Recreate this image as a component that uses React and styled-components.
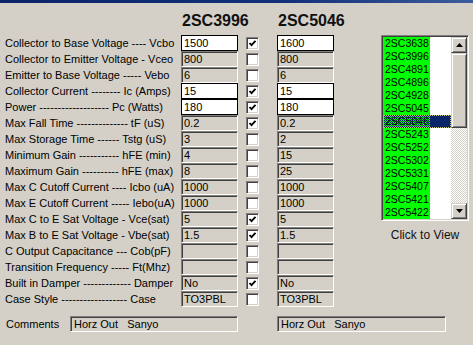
import { Fragment } from 'react'
import styled, { createGlobalStyle } from 'styled-components'

const GlobalStyle = createGlobalStyle`
  html, body {
    margin: 0;
    padding: 0;
    background: #d4d0c8;
    font-family: "Liberation Sans", Arial, sans-serif;
  }
`

const Window = styled.div`
  width: 473px;
  height: 345px;
  background: #d4d0c8;
  overflow: hidden;
  color: #000;
`

const TitleStrip = styled.div`
  height: 3px;
  background: linear-gradient(90deg, #0a246a 0%, #12307a 60%, #3a5c9c 100%);
`

const Main = styled.div`
  display: flex;
  align-items: flex-start;
`

const Form = styled.div`
  display: grid;
  grid-template-columns: 176px 57px 39px 57px;
  grid-template-rows: 32px;
  grid-auto-rows: 16px;
  padding-left: 5px;
`

const Heading = styled.div`
  grid-column: ${p => p.$col};
  align-self: end;
  padding: 0 0 6px 1px;
  font-size: 16px;
  line-height: 16px;
  font-weight: bold;
  white-space: nowrap;
  color: #111;
`

const Label = styled.div`
  grid-column: 1;
  font-size: 11px;
  line-height: 16px;
  white-space: nowrap;
  overflow: hidden;
`

const Field = styled.input`
  box-sizing: border-box;
  width: 100%;
  height: 16px;
  margin: 0;
  padding: 0 2px;
  font-family: "Liberation Sans", Arial, sans-serif;
  font-size: 11px;
  line-height: 14px;
  color: #000;
  outline: none;
  background: ${p => (p.readOnly ? '#d4d0c8' : '#fff')};
  border: 1px solid;
  border-color: ${p => (p.readOnly ? '#808080 #fff #fff #808080' : '#000')};
  box-shadow: ${p => (p.readOnly ? 'inset 1px 1px #404040' : 'none')};
`

const CheckCell = styled.div`
  display: flex;
  align-items: center;
  padding-left: 8px;
`

const Check = styled.span`
  box-sizing: border-box;
  width: 13px;
  height: 13px;
  background: #fff;
  border: 1px solid;
  border-color: #808080 #fff #fff #808080;
  box-shadow: inset 1px 1px #404040, inset -1px -1px #d4d0c8;
  display: flex;
  align-items: center;
  justify-content: center;
`

const Side = styled.div`
  display: flex;
  flex-direction: column;
  align-items: center;
  margin-left: 47px;
  margin-top: 32px;
  width: 88px;
`

const ListBox = styled.div`
  box-sizing: border-box;
  width: 88px;
  height: 186px;
  display: flex;
  background: #fff;
  border: 1px solid;
  border-color: #808080 #fff #fff #808080;
  box-shadow: inset 1px 1px #404040, inset -1px -1px #d4d0c8;
  padding: 1px;
`

const Items = styled.div`
  flex: 1;
  display: flex;
  flex-direction: column;
`

const Item = styled.div`
  height: 13px;
  line-height: 13px;
  font-size: 10.5px;
  background: ${p => (p.$selected ? '#0a246a' : 'transparent')};
  outline: ${p => (p.$selected ? '1px dotted #c8c870' : 'none')};
  outline-offset: -1px;
  span {
    display: inline-block;
    padding: 0 1px 0 2px;
    color: #000;
    background: ${p => (p.$selected
      ? 'repeating-conic-gradient(#00ff00 0 25%, #0a246a 0 50%) 0 0 / 2px 2px'
      : '#00ff00')};
  }
`

const ScrollBar = styled.div`
  width: 16px;
  display: flex;
  flex-direction: column;
  background: repeating-conic-gradient(#fff 0 25%, #d4d0c8 0 50%) 0 0 / 2px 2px;
`

const Raised = styled.div`
  box-sizing: border-box;
  width: 16px;
  height: ${p => p.$h}px;
  background: #d4d0c8;
  border: 1px solid;
  border-color: #d4d0c8 #404040 #404040 #d4d0c8;
  box-shadow: inset 1px 1px #fff, inset -1px -1px #808080;
  display: flex;
  align-items: center;
  justify-content: center;
`

const Track = styled.div`
  flex: 1;
`

const Caption = styled.div`
  margin-top: 7px;
  font-size: 12px;
  color: #111;
`

const CommentRow = styled.div`
  display: flex;
  align-items: center;
  margin-top: 9px;
  padding-left: 6px;
`

const CommentLabel = styled.div`
  width: 64px;
  font-size: 11px;
`

const CommentBox = styled.div`
  box-sizing: border-box;
  width: ${p => p.$w}px;
  margin-right: ${p => p.$gap || 0}px;
  height: 16px;
  padding-left: 3px;
  font-size: 11px;
  line-height: 14px;
  white-space: pre;
  background: #d4d0c8;
  border: 1px solid;
  border-color: #808080 #fff #fff #808080;
  box-shadow: inset 1px 1px #404040;
`

const rows = [
  ['Collector to Base Voltage ---- Vcbo', '1500', '1600', true, true],
  ['Collector to Emitter Voltage - Vceo', '800', '800', false, false],
  ['Emitter to Base Voltage ----- Vebo', '6', '6', false, false],
  ['Collector Current -------- Ic (Amps)', '15', '15', true, true],
  ['Power ------------------- Pc (Watts)', '180', '180', true, true],
  ['Max Fall Time -------------- tF (uS)', '0.2', '0.2', true, false],
  ['Max Storage Time ------ Tstg (uS)', '3', '2', false, false],
  ['Minimum Gain ----------- hFE (min)', '4', '15', false, false],
  ['Maximum Gain ---------- hFE (max)', '8', '25', false, false],
  ['Max C Cutoff Current ---- Icbo (uA)', '1000', '1000', false, false],
  ['Max E Cutoff Current ----- Iebo(uA)', '1000', '1000', false, false],
  ['Max C to E Sat Voltage - Vce(sat)', '5', '5', true, false],
  ['Max B to E Sat Voltage - Vbe(sat)', '1.5', '1.5', true, false],
  ['C Output Capacitance --- Cob(pF)', '', '', false, false],
  ['Transition Frequency ----- Ft(Mhz)', '', '', false, false],
  ['Built in Damper ------------- Damper', 'No', 'No', true, false],
  ['Case Style ------------------ Case', 'TO3PBL', 'TO3PBL', false, false],
]

const parts = [
  '2SC3638', '2SC3996', '2SC4891', '2SC4896', '2SC4928', '2SC5045', '2SC5046',
  '2SC5243', '2SC5252', '2SC5302', '2SC5331', '2SC5407', '2SC5421', '2SC5422',
]

function Tick() {
  return (
    <svg width="9" height="9" viewBox="0 0 9 9">
      <polyline points="1.5,4 3.5,6.2 7.5,1.8" fill="none" stroke="#000" strokeWidth="1.8" />
    </svg>
  )
}

function Arrow({ down }) {
  return (
    <svg width="7" height="4" viewBox="0 0 7 4">
      <polygon points={down ? '0,0 7,0 3.5,4' : '0,4 7,4 3.5,0'} fill="#000" />
    </svg>
  )
}

export default function App() {
  return (
    <Window>
      <GlobalStyle />
      <TitleStrip />
      <Main>
        <Form>
          <Heading $col="2 / span 2">2SC3996</Heading>
          <Heading $col="4">2SC5046</Heading>
          {rows.map(([label, a, b, checked, editable]) => (
            <Fragment key={label}>
              <Label>{label}</Label>
              <Field defaultValue={a} readOnly={!editable} />
              <CheckCell>
                <Check>{checked && <Tick />}</Check>
              </CheckCell>
              <Field defaultValue={b} readOnly={!editable} />
            </Fragment>
          ))}
        </Form>
        <Side>
          <ListBox>
            <Items>
              {parts.map(p => (
                <Item key={p} $selected={p === '2SC5046'}>
                  <span>{p}</span>
                </Item>
              ))}
            </Items>
            <ScrollBar>
              <Raised $h={16}><Arrow /></Raised>
              <Raised $h={75} />
              <Track />
              <Raised $h={16}><Arrow down /></Raised>
            </ScrollBar>
          </ListBox>
          <Caption>Click to View</Caption>
        </Side>
      </Main>
      <CommentRow>
        <CommentLabel>Comments</CommentLabel>
        <CommentBox $w={168} $gap={39}>{'Horz Out   Sanyo'}</CommentBox>
        <CommentBox $w={169}>{'Horz Out   Sanyo'}</CommentBox>
      </CommentRow>
    </Window>
  )
}
